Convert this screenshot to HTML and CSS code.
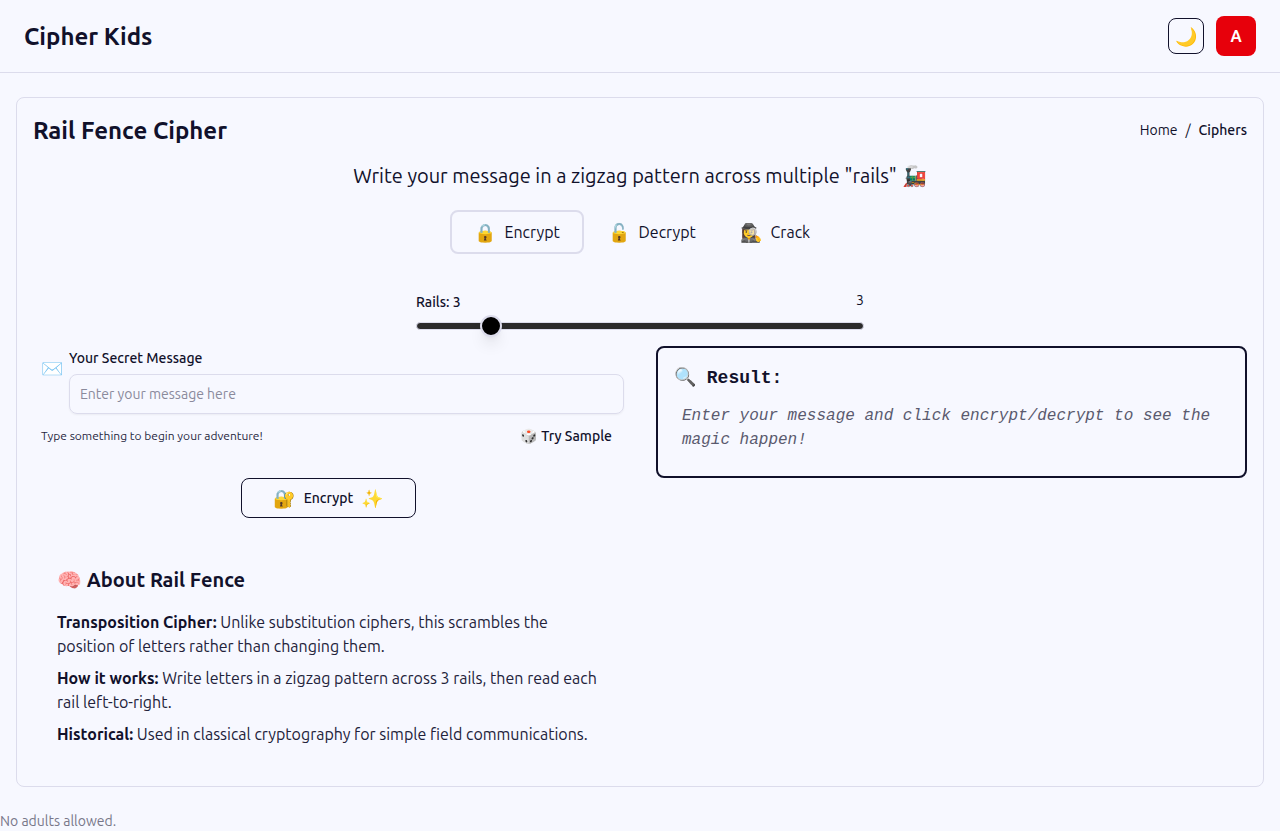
FILE: index.html
```
<!DOCTYPE html>
<html lang="en">
<head>
<meta charset="utf-8">
<title>Cipher Kids</title>
<link rel="stylesheet" href="styles.css">
</head>
<body>
<header class="topbar">
  <div class="brand">Cipher Kids</div>
  <div class="actions">
    <button class="theme" aria-label="Toggle theme">🌙</button>
    <button class="avatar">A</button>
  </div>
</header>
<main class="card">
  <div class="card-head">
    <h1>Rail Fence Cipher</h1>
    <nav class="crumbs"><span>Home</span><span>/</span><span class="current">Ciphers</span></nav>
  </div>
  <p class="lead">Write your message in a zigzag pattern across multiple "rails" <span class="train">🚂</span></p>
  <div class="tabs">
    <button class="tab active"><span class="emoji">🔒</span>Encrypt</button>
    <button class="tab"><span class="emoji">🔓</span>Decrypt</button>
    <button class="tab"><span class="emoji">🕵️‍♀️</span>Crack</button>
  </div>
  <div class="slider">
    <div class="slider-head"><label>Rails: 3</label><output>3</output></div>
    <div class="track"><div class="thumb"></div></div>
  </div>
  <div class="columns">
    <section>
      <div class="field">
        <span class="emoji">✉️</span>
        <div class="field-body">
          <label for="msg">Your Secret Message</label>
          <input id="msg" placeholder="Enter your message here">
        </div>
      </div>
      <div class="hint"><span>Type something to begin your adventure!</span><button class="sample"><span class="dice">🎲</span> Try Sample</button></div>
      <button class="submit"><span class="emoji">🔐</span>Encrypt<span class="emoji">✨</span></button>
      <div class="about">
        <h2>🧠 About Rail Fence</h2>
        <p><strong>Transposition Cipher:</strong> Unlike substitution ciphers, this scrambles the position of letters rather than changing them.</p>
        <p><strong>How it works:</strong> Write letters in a zigzag pattern across 3 rails, then read each rail left-to-right.</p>
        <p><strong>Historical:</strong> Used in classical cryptography for simple field communications.</p>
      </div>
    </section>
    <section class="result">
      <h3>🔍 Result:</h3>
      <p>Enter your message and click encrypt/decrypt to see the magic happen!</p>
    </section>
  </div>
</main>
<footer>No adults allowed.</footer>
</body>
</html>
```
FILE: styles.css
```
* { box-sizing: border-box; }
body {
  margin: 0;
  height: 831px;
  overflow: hidden;
  background: #f7f8ff;
  color: #11112b;
  font: 400 16px/24px Ubuntu, "Open Sans", sans-serif;
}
h1, h2, h3, p { margin: 0; }
button { font: inherit; color: inherit; background: transparent; border: 0; padding: 0; }
.emoji { font-size: 18px; line-height: 24px; }
.topbar {
  display: flex;
  align-items: center;
  justify-content: space-between;
  height: 73px;
  padding: 0 24px;
  border-bottom: 1px solid #dcdcec;
}
.brand { padding-top: 2px; font-size: 24px; line-height: 32px; font-weight: 600; }
.actions { display: flex; align-items: center; gap: 12px; }
.theme {
  width: 36px;
  height: 36px;
  border: 1px solid #11112b;
  border-radius: 8px;
  font-size: 18px;
  line-height: 28px;
}
.avatar {
  width: 40px;
  height: 40px;
  border-radius: 8px;
  background: #e7000b;
  color: #fff;
  font-weight: 600;
}
.card {
  margin: 24px 16px 0;
  height: 690px;
  padding: 16px;
  border: 1px solid #dcdcec;
  border-radius: 8px;
}
.card-head { display: flex; align-items: center; justify-content: space-between; height: 32px; }
h1 { padding-top: 2px; font-size: 24px; line-height: 32px; font-weight: 600; }
.crumbs { display: flex; gap: 8px; font-size: 14px; line-height: 20px; }
.current { font-weight: 500; }
.lead { margin-top: 16px; font-size: 20px; line-height: 28px; text-align: center; }
.train { margin-left: .4px; }
.tabs { display: flex; justify-content: center; gap: 4px; margin-top: 20px; }
.tab { display: flex; align-items: center; gap: 8px; height: 44px; padding: 0 20px; }
.tab .emoji { width: 22.7px; text-align: left; }
.tab.active { padding: 0 22px; border: 2px solid #dcdcec; border-radius: 8px; }
.slider { width: 448px; margin: 38px auto 0; }
.slider-head { display: flex; justify-content: space-between; font-size: 14px; line-height: 20px; }
.slider-head label { font-weight: 500; }
.slider-head output { line-height: 16px; }
.track {
  height: 8px;
  margin-top: 10px;
  border: 1px solid #dcdcec;
  border-radius: 4px;
  background: #2b2b2b;
}
.thumb {
  width: 22px;
  height: 22px;
  margin: -8px 0 0 63.4px;
  border: 2px solid #dcdcec;
  border-radius: 50%;
  background: #000;
  box-shadow: 0 10px 15px -3px rgb(0 0 0 / .1), 0 4px 6px -4px rgb(0 0 0 / .1);
}
.columns { display: grid; grid-template-columns: 591px 591px; gap: 32px; align-items: start; margin-top: 16px; }
.field { display: flex; align-items: center; gap: 6px; padding-left: 8px; }
.field > .emoji { width: 22px; margin-top: -24px; }
.field-body { flex: 1; }
.field-body label { display: block; padding-top: 2px; font-size: 14px; line-height: 20px; font-weight: 500; }
.field-body input {
  display: block;
  width: 100%;
  height: 40px;
  margin-top: 6px;
  padding: 0 10px;
  border: 1px solid #dcdcec;
  border-radius: 8px;
  background: transparent;
  font: 400 14px/20px Ubuntu, "Open Sans", sans-serif;
  box-shadow: 0 1px 2px rgb(0 0 0 / .05);
}
input::placeholder { color: #8a8a9c; opacity: 1; }
.hint { display: flex; align-items: center; justify-content: space-between; height: 32px; margin-top: 6px; padding: 0 12px 0 8px; font-size: 12px; color: #28283f; }
.sample { font-size: 14px; font-weight: 500; color: #11112b; }
.dice { margin-right: .6px; }
.submit {
  display: flex;
  align-items: center;
  justify-content: center;
  gap: 8px;
  width: 175px;
  height: 40px;
  margin: 26px auto 0;
  border: 1px solid #11112b;
  border-radius: 8px;
  font-size: 14px;
  font-weight: 500;
}
.submit .emoji { width: 23px; text-align: left; }
.about { margin-top: 48px; padding: 0 24px; color: #22223a; }
.about h2 { font-size: 20px; line-height: 28px; font-weight: 600; margin-bottom: 16px; color: #11112b; }
.about p + p { margin-top: 8px; }
.about strong { font-weight: 600; color: #11112b; }
.result {
  height: 132px;
  padding: 16px 16px 14px;
  border: 2px solid #11112b;
  border-radius: 8px;
  font-family: "Liberation Mono", monospace;
}
.result h3 { font-size: 18px; line-height: 28px; font-weight: 700; }
.result p { margin-top: 12px; padding: 0 8px; font-style: italic; color: #5a5a6e; }
footer { margin-top: 24px; font-size: 14px; line-height: 20px; color: #777789; }
```
